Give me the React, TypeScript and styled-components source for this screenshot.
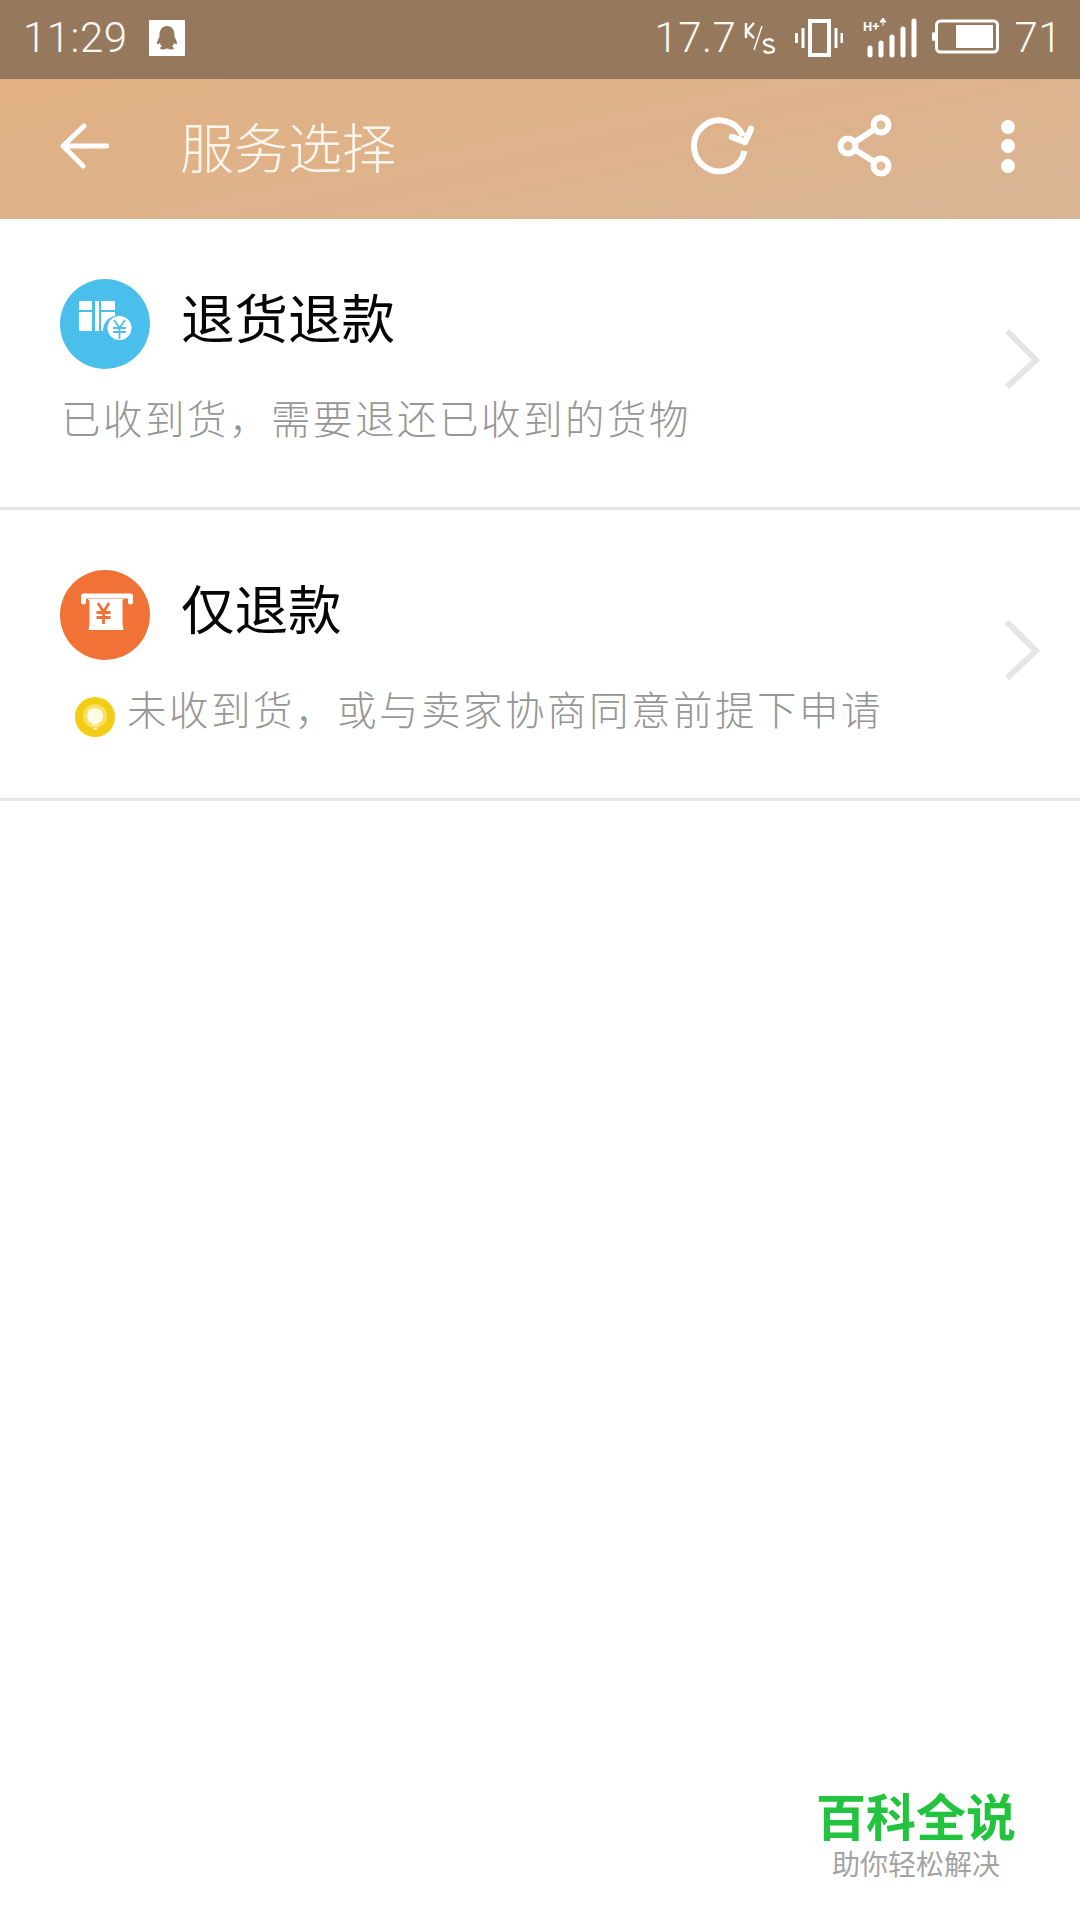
import React from "react";
import styled, { createGlobalStyle } from "styled-components";

const Global = createGlobalStyle`
  html, body { margin: 0; padding: 0; background: #fff; }
  body { font-family: "Noto Sans CJK SC", Roboto, sans-serif; }
  * { box-sizing: border-box; }
`;

const Page = styled.div`
  position: relative;
  width: 1080px;
  height: 1920px;
  background: #fff;
  overflow: hidden;
`;

const StatusBar = styled.div`
  height: 79px;
  background: #96785c;
  display: flex;
  align-items: center;
  justify-content: space-between;
  padding: 0 18px 3px 23px;
  color: #fbf8f4;
  font-family: Roboto, sans-serif;
  font-weight: 300;
`;

const StatusGroup = styled.div`
  display: flex;
  align-items: center;
`;

const StatusText = styled.span<{ $ml?: number }>`
  font-size: 42px;
  line-height: 60px;
  letter-spacing: 0.5px;
  margin-left: ${(p) => p.$ml ?? 0}px;
`;

const QQBadge = styled.svg`
  width: 36px;
  height: 36px;
  margin-left: 21px;
`;

const SpeedUnit = styled.svg`
  width: 32px;
  height: 36px;
  margin-left: 8px;
`;

const StatusIcon = styled.svg<{ $w: number; $ml: number }>`
  width: ${(p) => p.$w}px;
  height: 40px;
  margin-left: ${(p) => p.$ml}px;
`;

const AppBar = styled.div`
  height: 140px;
  background: linear-gradient(168deg, #e1b084 0%, #dfb289 40%, #d9b595 100%);
  display: flex;
  align-items: center;
  padding: 0 0 0 60px;
  color: #fff;
`;

const BackIcon = styled.svg`
  width: 49px;
  height: 46px;
  margin-bottom: 6px;
`;

const Title = styled.h1`
  flex: 1;
  margin: 0 0 6px 71px;
  font-size: 54px;
  font-weight: 300;
  line-height: 120px;
  color: #fdf6ee;
`;

const ActionIcon = styled.svg<{ $w: number; $mr: number }>`
  width: ${(p) => p.$w}px;
  height: 64px;
  margin: 0 ${(p) => p.$mr}px 8px 0;
`;

const Row = styled.div`
  height: 291px;
  border-bottom: 3px solid #e4e7e6;
  display: flex;
  justify-content: space-between;
  padding: 60px 40px 0 60px;
`;

const RowBody = styled.div`
  display: flex;
  flex-direction: column;
`;

const RowHead = styled.div`
  display: flex;
  align-items: center;
  gap: 31px;
`;

const Circle = styled.svg`
  width: 90px;
  height: 90px;
  display: block;
`;

const RowTitle = styled.div`
  font-size: 53.5px;
  line-height: 76px;
  color: #050505;
  margin-top: -16px;
`;

const RowHint = styled.div<{ $indent?: boolean }>`
  display: flex;
  align-items: flex-start;
  margin-top: 20px;
  margin-left: ${(p) => (p.$indent ? "15px" : "1px")};
  font-size: 39.5px;
  line-height: 56px;
  letter-spacing: 2.5px;
  color: #969696;
  font-weight: 300;
  white-space: nowrap;
`;

const Bulb = styled.svg`
  width: 40px;
  height: 40px;
  margin: 17px 12px 0 0;
  flex: none;
`;

const Chevron = styled.svg`
  width: 36px;
  height: 62px;
  align-self: center;
  margin-top: -66px;
`;

const Mark = styled.div`
  position: absolute;
  right: 62px;
  top: 1786px;
  width: 204px;
  display: flex;
  flex-direction: column;
  align-items: center;
`;

const MarkName = styled.div`
  font-size: 50px;
  line-height: 56px;
  font-weight: 700;
  color: #22c33f;
  white-space: nowrap;
`;

const MarkSub = styled.div`
  margin-top: 3px;
  font-size: 28px;
  line-height: 36px;
  color: #a3a3a3;
  white-space: nowrap;
`;

const ChevronMark = () => (
  <Chevron viewBox="0 0 36 62">
    <path d="M3 2 L32 31 L3 58" fill="none" stroke="#e5e5e5" strokeWidth="6" />
  </Chevron>
);

export default function App() {
  return (
    <Page>
      <Global />
      <StatusBar>
        <StatusGroup>
          <StatusText>11:29</StatusText>
          <QQBadge viewBox="0 0 36 36">
            <rect width="36" height="36" rx="1" fill="#fff" />
            <path
              d="M18 6c-5 0-7.500 4-7.500 9 0 2-.5 3-2 6-1 2.500-.5 4 1 3l1.500-1c.3 1.500 1 2.500 2 3.500-1.500.5-2.500 1.500-1.500 2.500 1 .8 4 .5 6.500-.5 2.500 1 5.500 1.300 6.500.5 1-1 0-2-1.500-2.500 1-1 1.700-2 2-3.500l1.500 1c1.500 1 2-.5 1-3-1.500-3-2-4-2-6 0-5-2.500-9-7.500-9z"
              fill="#96785c"
            />
          </QQBadge>
        </StatusGroup>
        <StatusGroup>
          <StatusText>17.7</StatusText>
          <SpeedUnit viewBox="0 0 32 36">
            <path d="M2 3v15M10 3L3 11l7 7" fill="none" stroke="#fbf8f4" strokeWidth="2.500" />
            <path d="M18 6L10 30" fill="none" stroke="#fbf8f4" strokeWidth="1.500" />
            <path d="M29 21.500c-1-3-9-3-9 1s10 3 10 7-9 4-10 1" fill="none" stroke="#fbf8f4" strokeWidth="2.500" />
          </SpeedUnit>
          <StatusIcon $w={48} $ml={19} viewBox="0 0 48 40">
            <rect x="15" y="3" width="19" height="34" fill="none" stroke="#fff" strokeWidth="4" />
            <path d="M1.500 13v10M8 8v20M41 8v20M47 13v10" stroke="#fff" strokeWidth="3" transform="translate(0 2)" />
          </StatusIcon>
          <StatusIcon $w={54} $ml={20} viewBox="0 0 54 40">
            <text x="0" y="13" fontFamily="Roboto, sans-serif" fontSize="13" fontWeight="700" fill="#fff">H+</text>
            <path d="M20 0l3 4h-6zM20 4v4" fill="#fff" stroke="#fff" strokeWidth="1" />
            <path d="M7 37V30M18 37V25M29 37V19M40 37V11M51 37V3" stroke="#fff" strokeWidth="5" strokeLinecap="round" />
          </StatusIcon>
          <StatusIcon $w={68} $ml={15} viewBox="0 0 68 40">
            <rect x="4.500" y="3" width="61" height="31" rx="4" fill="none" stroke="#fff" strokeWidth="3" />
            <rect x="0" y="14" width="3" height="9" rx="1.500" fill="#fff" />
            <rect x="24" y="7" width="37" height="23" fill="#fff" />
          </StatusIcon>
          <StatusText $ml={14}>71</StatusText>
        </StatusGroup>
      </StatusBar>

      <AppBar>
        <BackIcon viewBox="0 0 49 46">
          <path d="M47 23H4M24 3L3 23l20 20" fill="none" stroke="#fff" strokeWidth="5" strokeLinecap="round" strokeLinejoin="round" />
        </BackIcon>
        <Title>服务选择</Title>
        <ActionIcon $w={64} $mr={83} viewBox="0 0 64 64">
          <path d="M54.500 38A25.500 25.500 0 1 1 53 23" fill="none" stroke="#fff" strokeWidth="6" />
          <path d="M42 24l13 5 6-13" fill="none" stroke="#fff" strokeWidth="6.500" strokeLinecap="round" strokeLinejoin="round" />
        </ActionIcon>
        <ActionIcon $w={56} $mr={107} viewBox="0 0 56 64">
          <path d="M44 12L12 33l32 20" fill="none" stroke="#fff" strokeWidth="6" />
          <circle cx="44" cy="12" r="7.500" fill="#e0bb98" stroke="#fff" strokeWidth="6" />
          <circle cx="11" cy="33" r="7.500" fill="#e0bb98" stroke="#fff" strokeWidth="6" />
          <circle cx="44" cy="53" r="7.500" fill="#e0bb98" stroke="#fff" strokeWidth="6" />
        </ActionIcon>
        <ActionIcon $w={16} $mr={64} viewBox="0 0 16 64">
          <circle cx="8" cy="14" r="7" fill="#fff" />
          <circle cx="8" cy="33" r="7" fill="#fff" />
          <circle cx="8" cy="53" r="7" fill="#fff" />
        </ActionIcon>
      </AppBar>

      <Row>
        <RowBody>
          <RowHead>
            <Circle viewBox="0 0 90 90">
              <circle cx="45" cy="45" r="45" fill="#4bbfec" />
              <rect x="19" y="22" width="13" height="9" fill="#fff" />
              <rect x="19" y="33" width="13" height="19" fill="#fff" />
              <rect x="35" y="22" width="4" height="30" fill="#fff" />
              <rect x="41" y="22" width="14" height="9" fill="#fff" />
              <path d="M41 33h14v4c-7 1-12 7-12 15h-2z" fill="#fff" />
              <circle cx="59.500" cy="49" r="12" fill="#fff" />
              <path d="M54 41l5.500 8 5.500-8M53 49h13M53 53h13M59.500 49v11" fill="none" stroke="#4bbfec" strokeWidth="1.800" />
            </Circle>
            <RowTitle>退货退款</RowTitle>
          </RowHead>
          <RowHint>已收到货，需要退还已收到的货物</RowHint>
        </RowBody>
        <ChevronMark />
      </Row>

      <Row>
        <RowBody>
          <RowHead>
            <Circle viewBox="0 0 90 90">
              <circle cx="45" cy="45" r="45" fill="#f07236" />
              <path d="M23.500 32v-6h47v6" fill="none" stroke="#fff" strokeWidth="5" strokeLinecap="round" strokeLinejoin="round" />
              <path d="M27.500 29h36l-1 2v23l1 6H28.500l1-6V31z" fill="#fff" />
              <path d="M38 33l5.500 9 5.500-9M36.500 42.500h14M36.500 47.500h14M43.500 42v12" fill="none" stroke="#f07236" strokeWidth="2.800" />
            </Circle>
            <RowTitle>仅退款</RowTitle>
          </RowHead>
          <RowHint $indent>
            <Bulb viewBox="0 0 40 40">
              <circle cx="20" cy="20" r="20" fill="#f2cd13" />
              <circle cx="20" cy="19" r="12" fill="#f8e067" />
              <circle cx="20" cy="19" r="8" fill="#fffbe6" />
              <rect x="17" y="27" width="6" height="2" fill="#fdf3b0" />
              <rect x="18" y="31" width="4" height="2" fill="#fdf3b0" />
            </Bulb>
            未收到货，或与卖家协商同意前提下申请
          </RowHint>
        </RowBody>
        <ChevronMark />
      </Row>

      <Mark>
        <MarkName>百科全说</MarkName>
        <MarkSub>助你轻松解决</MarkSub>
      </Mark>
    </Page>
  );
}
